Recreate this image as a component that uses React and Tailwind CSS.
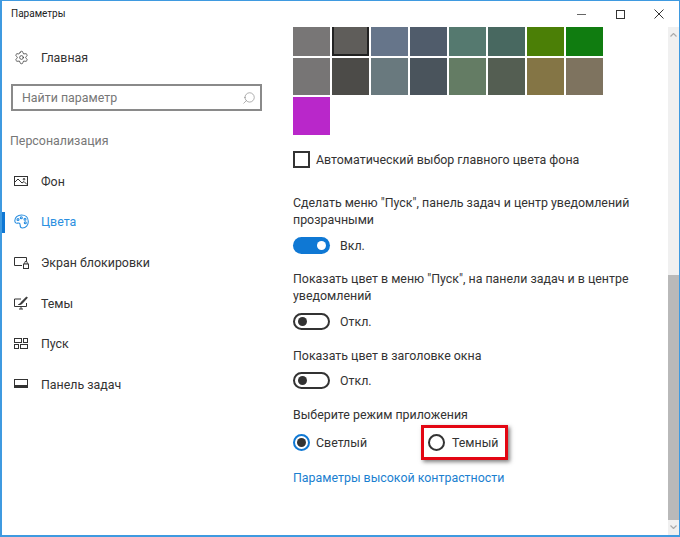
import { Search, Settings } from "lucide-react";

const font = { fontFamily: 'Roboto, sans-serif' };

const swatches = [
  ["#787676", "#5f5d5a", "#66758a", "#505c6b", "#55796f", "#486860", "#4b7f06", "#107c10"],
  ["#777575", "#4c4b48", "#69797e", "#4a545c", "#647c64", "#545e52", "#847545", "#7e735f"],
];

function ImageIcon() {
  return (
    <svg width="14" height="12" viewBox="0 0 14 12" fill="none" stroke="#333" strokeWidth="1">
      <rect x="0.5" y="1.5" width="13" height="9" />
      <path d="M1 7l3-3 4 4 2-1.5 3 3" />
      <circle cx="10" cy="4.2" r="0.8" />
    </svg>
  );
}

function PaletteIcon() {
  return (
    <svg width="15" height="15" viewBox="0 0 15 15" fill="none" stroke="#2b8fe0" strokeWidth="1.1">
      <path d="M7.5 1C3.5 1 .8 3.6.8 6.8c0 2 1.5 2.7 2.8 2.3 1.4-.4 2.5.3 2.5 1.6 0 1 .1 3.3 2.4 3.3 3.4 0 5.8-3 5.8-6.6C14.3 3.5 11.5 1 7.5 1z" />
      <circle cx="4" cy="5.5" r="1" />
      <circle cx="7.3" cy="3.7" r="1" />
      <circle cx="11" cy="5.2" r="1" />
      <circle cx="11.3" cy="8.8" r="1" />
    </svg>
  );
}

function LockScreenIcon() {
  return (
    <svg width="15" height="13" viewBox="0 0 15 13" fill="none" stroke="#333" strokeWidth="1">
      <path d="M8 9.5H.5v-8h12V5" />
      <rect x="9.5" y="8" width="5" height="4.5" />
      <path d="M10.8 8V6.5a1.2 1.2 0 0 1 2.4 0V8" />
    </svg>
  );
}

function ThemesIcon() {
  return (
    <svg width="14" height="14" viewBox="0 0 14 14" fill="none" stroke="#333" strokeWidth="1">
      <path d="M7 3H.5v7.5h12V7" />
      <path d="M5 13h4M7 10.5V13" />
      <path d="M4.5 8.5c1.5 0 1.7-1 2.2-1.7L12.5 1l.8.8-5.5 6c-.8.7-1.8.9-3.3.7z" fill="#333" />
    </svg>
  );
}

function StartIcon() {
  return (
    <svg width="14" height="12" viewBox="0 0 14 12" fill="none" stroke="#333" strokeWidth="1">
      <rect x="0.5" y="0.5" width="7" height="4" />
      <rect x="9.5" y="0.5" width="4" height="4" />
      <rect x="0.5" y="6.5" width="4" height="4" />
      <rect x="6.5" y="6.5" width="7" height="4" />
    </svg>
  );
}

function TaskbarIcon() {
  return (
    <svg width="14" height="10" viewBox="0 0 14 10" fill="none" stroke="#333" strokeWidth="1">
      <rect x="0.5" y="0.5" width="13" height="8" />
      <path d="M1 7h12" strokeWidth="2" />
    </svg>
  );
}

const navItems = [
  { label: "Фон", icon: <ImageIcon /> },
  { label: "Цвета", icon: <PaletteIcon />, active: true },
  { label: "Экран блокировки", icon: <LockScreenIcon /> },
  { label: "Темы", icon: <ThemesIcon /> },
  { label: "Пуск", icon: <StartIcon /> },
  { label: "Панель задач", icon: <TaskbarIcon /> },
];

function NavItem({ label, icon, active }) {
  return (
    <div className="relative flex h-[40.6px] items-center pl-[12px]">
      {active && <span className="absolute left-0 top-[10px] h-[21px] w-[3px] bg-[#0f78d4]" />}
      <span className="flex w-[27px] items-center">{icon}</span>
      <span className={active ? "text-[#2b8fe0]" : "text-[#333]"}>{label}</span>
    </div>
  );
}

function Toggle({ on, label }) {
  return (
    <div className="flex h-[18px] items-center gap-[10px] text-[#333]">
      {on ? (
        <span className="flex h-[17px] w-[37px] items-center justify-end rounded-full bg-[#0f78d4] pr-[4px]">
          <span className="h-[9px] w-[9px] rounded-full bg-white" />
        </span>
      ) : (
        <span className="flex h-[17px] w-[37px] items-center rounded-full border-2 border-[#333] pl-[3px]">
          <span className="h-[9px] w-[9px] rounded-full bg-[#333]" />
        </span>
      )}
      <span>{label}</span>
    </div>
  );
}

export default function App() {
  return (
    <div style={font} className="flex h-[537px] w-[680px] flex-col overflow-hidden border border-b-2 border-l-2 border-[#3f9ae0] bg-white text-[12.4px] leading-[17px]">
      <div className="flex h-[26px] shrink-0 items-center justify-between">
        <span className="pb-[1px] pl-[9px] text-[10px] text-[#222]">Параметры</span>
        <div className="flex items-center">
          <span className="flex h-[26px] w-[39px] items-center justify-center">
            <span className="h-px w-[9px] bg-[#666]" />
          </span>
          <span className="flex h-[26px] w-[39px] items-center justify-center">
            <span className="h-[9px] w-[9px] border border-[#333]" />
          </span>
          <span className="flex h-[26px] w-[39px] items-center justify-center pr-[1px]">
            <svg width="10" height="10" viewBox="0 0 10 10" stroke="#333" strokeWidth="1">
              <path d="M.5.5l9 9M9.5.5l-9 9" />
            </svg>
          </span>
        </div>
      </div>

      <div className="flex min-h-0 flex-1">
        <aside className="w-[291px] shrink-0">
          <div className="flex h-[31px] items-center pl-[12px] pt-[30px] text-[#333]">
            <Settings size={15} strokeWidth={1.2} className="mr-[12px]" />
            <span>Главная</span>
          </div>
          <div className="ml-[9px] mt-[26px] flex h-[27px] w-[251px] items-center justify-between border-2 border-[#8a8a8a] pl-[9px] pr-[4px] text-[#777]">
            <span>Найти параметр</span>
            <Search size={14} strokeWidth={1} className="-scale-x-100 text-[#777]" />
          </div>
          <div className="ml-[8px] mt-[21px] text-[#777]">Персонализация</div>
          <nav className="mt-[12px]">
            {navItems.map((item) => (
              <NavItem key={item.label} {...item} />
            ))}
          </nav>
        </aside>

        <main className="min-w-0 flex-1">
          <div className="flex flex-col gap-[2px]">
            {swatches.map((row, i) => (
              <div key={i} className="flex gap-[2px]">
                {row.map((color) => (
                  <span
                    key={color}
                    style={{ backgroundColor: color }}
                    className={`w-[37px] ${i === 0 ? "h-[29px]" : "h-[37px]"} ${color === "#5f5d5a" ? "border-2 border-t-0 border-[#222]" : ""}`}
                  />
                ))}
              </div>
            ))}
            <span className="h-[38px] w-[37px] bg-[#b927ca]" />
          </div>

          <label className="mt-[16px] flex items-center gap-[6px] text-[#333]">
            <span className="h-[17px] w-[17px] border-2 border-[#333]" />
            Автоматический выбор главного цвета фона
          </label>

          <p className="mt-[26px] w-[345px] text-[#333]">Сделать меню "Пуск", панель задач и центр уведомлений прозрачными</p>
          <div className="mt-[8px]"><Toggle on label="Вкл." /></div>

          <p className="mt-[16px] w-[345px] text-[#333]">Показать цвет в меню "Пуск", на панели задач и в центре уведомлений</p>
          <div className="mt-[8px]"><Toggle label="Откл." /></div>

          <p className="mt-[17px] text-[#333]">Показать цвет в заголовке окна</p>
          <div className="mt-[7px]"><Toggle label="Откл." /></div>

          <p className="mt-[17px] text-[#333]">Выберите режим приложения</p>
          <div className="mt-[2px] flex items-center text-[#333]">
            <div className="flex w-[128px] items-center gap-[6px]">
              <span className="flex h-[17px] w-[17px] items-center justify-center rounded-full border-2 border-[#0f78d4]">
                <span className="h-[9px] w-[9px] rounded-full bg-[#333]" />
              </span>
              Светлый
            </div>
            <div className="flex h-[35px] w-[87px] items-center gap-[7px] border-[3px] border-[#e30613] pl-[4px] shadow-[2px_2px_4px_rgba(0,0,0,0.5)]">
              <span className="h-[17px] w-[17px] rounded-full border-2 border-[#333]" />
              Темный
            </div>
          </div>
          <a className="mt-[9px] block text-[#1b7fd0]">Параметры высокой контрастности</a>
        </main>

        <div className="flex w-[11px] shrink-0 flex-col bg-[#f0f0f0]">
          <span className="flex h-[16px] items-center justify-center text-[#aaa]">
            <svg width="7" height="4" viewBox="0 0 7 4" fill="none" stroke="currentColor" strokeWidth="1.2"><path d="M.5 3.5l3-3 3 3" /></svg>
          </span>
          <span className="mt-[232px] h-[245px] bg-[#b9b9b9]" />
          <span className="flex h-[14px] items-center justify-center text-[#aaa]">
            <svg width="7" height="4" viewBox="0 0 7 4" fill="none" stroke="currentColor" strokeWidth="1.2"><path d="M.5.5l3 3 3-3" /></svg>
          </span>
        </div>
      </div>
    </div>
  );
}
